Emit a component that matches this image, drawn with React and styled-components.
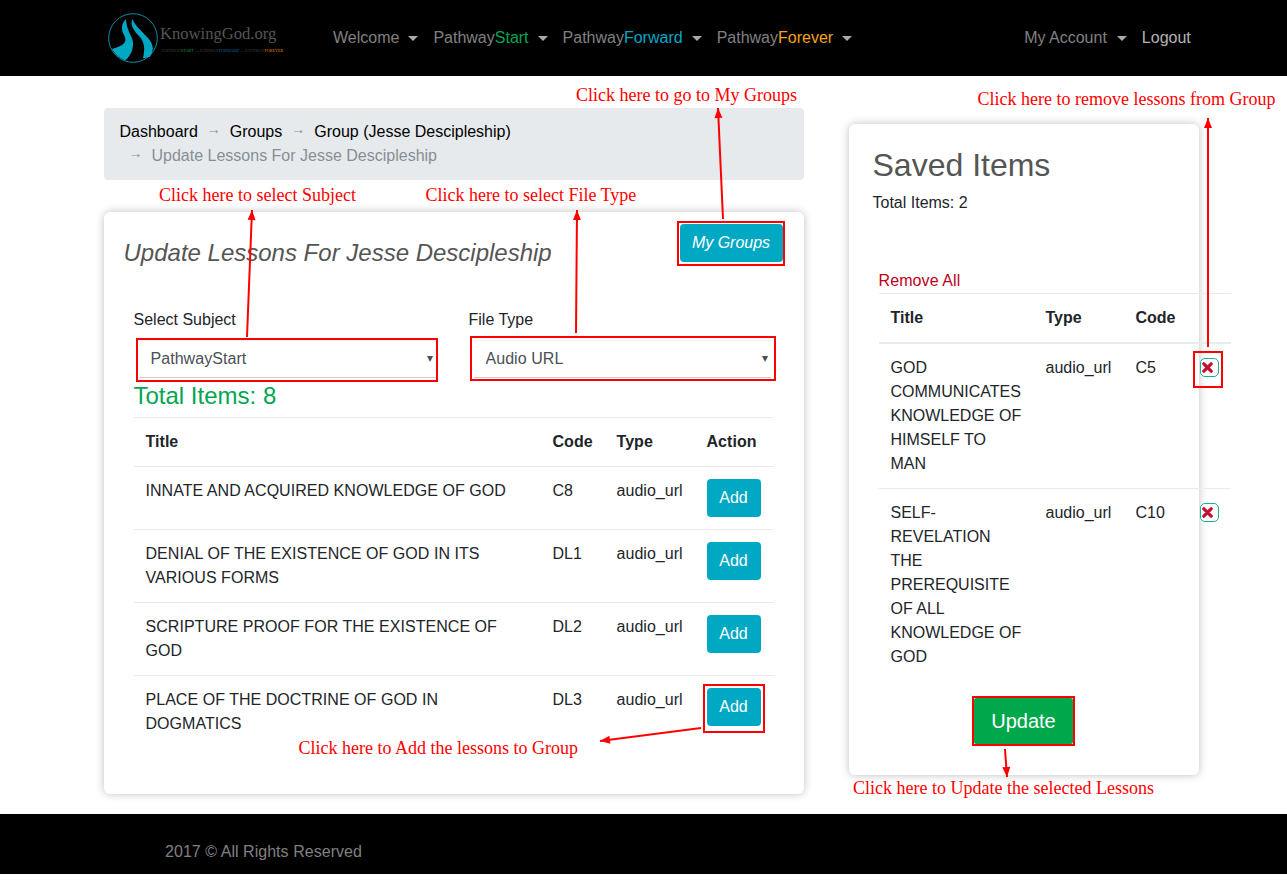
import React from 'react';
import styled, { createGlobalStyle } from 'styled-components';

const GlobalStyle = createGlobalStyle`
  html, body {
    margin: 0;
    padding: 0;
    background: #fff;
    font-family: "Liberation Sans", Arial, sans-serif;
    font-size: 16px;
    line-height: 24px;
    color: #212529;
  }
  * { box-sizing: border-box; }
`;

const Page = styled.div`
  position: relative;
  width: 1287px;
`;

const Navbar = styled.nav`
  display: flex;
  align-items: center;
  height: 76px;
  padding-left: 108px;
  background: #000;
`;

const Brand = styled.div`
  display: flex;
  align-items: flex-start;
  width: 225px;
`;

const BrandText = styled.div`
  display: flex;
  flex-direction: column;
  padding-top: 10px;
  font-family: "Liberation Serif", serif;
`;

const BrandName = styled.span`
  font-size: 16.6px;
  line-height: 24px;
  color: #555;
`;

const BrandTag = styled.span`
  font-size: 4px;
  line-height: 6px;
  margin-top: 2px;
  margin-left: 2px;
  letter-spacing: 0.1px;
  white-space: nowrap;
  color: #444;
`;

const Tint = styled.span`
  color: ${(p) => p.$color};
`;

const NavList = styled.div`
  display: flex;
  gap: 15px;
`;

const NavItem = styled.a`
  display: flex;
  align-items: center;
  color: ${(p) => p.$light ? '#b5b5b5' : '#808080'};
  white-space: nowrap;
`;

const Caret = styled.i`
  display: inline-block;
  margin-left: 9px;
  border-top: 5px solid #aaa;
  border-left: 5px solid transparent;
  border-right: 5px solid transparent;
`;

const NavRight = styled(NavList)`
  margin-left: 172px;

  ${Caret} {
    margin-left: 10px;
  }
`;

const Main = styled.main`
  display: flex;
  gap: 45px;
  padding: 32px 0 20px 103.5px;
`;

const LeftCol = styled.div`
  width: 700px;
`;

const RightCol = styled.div`
  width: 350px;
  padding-top: 16px;
`;

const Breadcrumb = styled.div`
  height: 72px;
  margin-bottom: 32px;
  padding: 12px 16px;
  background: #e6eaec;
  border-radius: 4px;
  color: #000;
`;

const Crumb = styled.span`
  color: ${(p) => p.$muted ? '#868e96' : '#000'};
`;

const Sep = styled.span`
  display: inline-block;
  width: 32px;
  text-align: center;
  font-size: 14px;
  line-height: 0;
  vertical-align: 3px;
  color: #868e96;
`;

const Card = styled.section`
  background: #fff;
  border-radius: 6px;
  box-shadow: 0 0 8px rgba(0, 0, 0, 0.25);
`;

const LessonsCard = styled(Card)`
  height: 582px;
  padding: 12px 30px 0 30px;
`;

const CardHead = styled.div`
  display: flex;
  justify-content: space-between;
  margin: 0 -9px 0 -10px;
`;

const CardTitle = styled.h2`
  margin: 0;
  padding-top: 12px;
  font-size: 24px;
  line-height: 34px;
  font-weight: 400;
  font-style: italic;
  color: #555;
`;

const GroupsButton = styled.button`
  width: 103px;
  height: 38px;
  border: 0;
  border-radius: 4px;
  background: #00a8c4;
  color: #fff;
  font: italic 16px "Liberation Sans", Arial, sans-serif;
`;

const Filters = styled.div`
  display: flex;
  gap: 30px;
  margin-top: 38px;
`;

const Field = styled.div`
  width: 305px;
`;

const FieldLabel = styled.label`
  display: block;
  margin-bottom: 8px;
`;

const SelectBox = styled.div`
  position: relative;
  margin-left: 5px;
  width: 297px;
`;

const Select = styled.select`
  display: block;
  width: 100%;
  height: 38px;
  padding: 0 12px 2px;
  border: 0;
  border-top: 1px solid #f0f0f0;
  border-bottom: 1px solid #ccc;
  border-radius: 0;
  appearance: none;
  background: #fff;
  color: #495057;
  font: 16px "Liberation Sans", Arial, sans-serif;
  letter-spacing: 0.05px;
`;

const SelectCaret = styled.span`
  position: absolute;
  top: 6px;
  right: 3px;
  font-size: 12px;
  color: #495057;
`;

const TotalItems = styled.div`
  margin: 3px 0 7px;
  font-size: 24px;
  line-height: 29px;
  color: #00a651;
`;

const LessonTable = styled.table`
  width: 640px;
  table-layout: fixed;
  border-collapse: collapse;
  letter-spacing: 0.04px;
`;

const SavedTable = styled(LessonTable)`
  width: 352px;
  margin-left: 30px;
  letter-spacing: 0;
`;

const Th = styled.th`
  width: ${(p) => p.$w}px;
  padding: 12px;
  text-align: left;
  vertical-align: bottom;
  border-top: 1px solid #e9ecef;
  border-bottom: ${(p) => p.$thin ? 1 : 2}px solid #e9ecef;
`;

const Td = styled.td`
  padding: 12px;
  vertical-align: top;
  border-top: 1px solid #e9ecef;
`;

const AddButton = styled.button`
  width: 54px;
  height: 38px;
  border: 0;
  border-radius: 4px;
  background: #00a8c4;
  color: #fff;
  font: 16px "Liberation Sans", Arial, sans-serif;
`;

const SavedCard = styled(Card)`
  height: 651px;
  overflow: visible;
  padding-top: 24px;
`;

const SavedTitle = styled.h2`
  margin: 0 0 0 24px;
  font-size: 32px;
  line-height: 34px;
  font-weight: 400;
  color: #555;
`;

const SavedCount = styled.div`
  margin: 9px 0 0 24px;
`;

const RemoveAll = styled.a`
  display: block;
  margin: 54px 0 0 30px;
  letter-spacing: 0.1px;
  color: #c00020;
`;

const RemoveButton = styled.button`
  display: flex;
  align-items: center;
  justify-content: center;
  width: 19px;
  height: 19px;
  margin-top: 2px;
  padding: 0 4px 0 0;
  background: #fff;
  border: 1px solid #1ab092;
  border-radius: 5px;
  color: #c8102e;
`;

const UpdateRow = styled.div`
  display: flex;
  justify-content: center;
  margin-top: 17px;
`;

const UpdateButton = styled.button`
  width: 99px;
  height: 46px;
  border: 0;
  border-radius: 2px;
  background: #00a84c;
  color: #fff;
  font: 20px "Liberation Sans", Arial, sans-serif;
`;

const Footer = styled.footer`
  height: 60px;
  padding: 26px 0 0 165px;
  background: #000;
  letter-spacing: 0.04px;
  color: #808080;
`;

const Note = styled.span`
  position: absolute;
  left: ${(p) => p.$x}px;
  top: ${(p) => p.$y}px;
  font-family: "Liberation Serif", serif;
  font-size: 18px;
  line-height: 22px;
  color: #f00;
  white-space: nowrap;
`;

const Marks = styled.svg`
  position: absolute;
  left: 0;
  top: 0;
  pointer-events: none;
`;

const lessons = [
  ['INNATE AND ACQUIRED KNOWLEDGE OF GOD', 'C8'],
  ['DENIAL OF THE EXISTENCE OF GOD IN ITS VARIOUS FORMS', 'DL1'],
  ['SCRIPTURE PROOF FOR THE EXISTENCE OF GOD', 'DL2'],
  ['PLACE OF THE DOCTRINE OF GOD IN DOGMATICS', 'DL3'],
];

const saved = [
  ['GOD COMMUNICATES KNOWLEDGE OF HIMSELF TO MAN', 'C5'],
  ['SELF-REVELATION THE PREREQUISITE OF ALL KNOWLEDGE OF GOD', 'C10'],
];

const boxes = [
  [678, 222, 106, 43],
  [137, 339, 300, 42],
  [471, 337, 304, 43],
  [1194, 352, 28, 35],
  [704, 685, 60, 47],
  [973, 697, 101, 48],
];

const arrows = [
  [723, 219, 718, 108],
  [247, 337, 252, 210],
  [576, 333, 577, 210],
  [1208, 347, 1208, 118],
  [701, 728, 600, 741],
  [1005, 749, 1007, 777],
];

const Arrow = ({ line }) => {
  const [x1, y1, x2, y2] = line;
  const a = Math.atan2(y2 - y1, x2 - x1);
  const p = (d, s) => `${x2 - Math.cos(a) * d - Math.sin(a) * s},${y2 - Math.sin(a) * d + Math.cos(a) * s}`;
  return (
    <g>
      <line x1={x1} y1={y1} x2={x2} y2={y2} stroke="#f00" strokeWidth="2" />
      <polygon points={`${x2},${y2} ${p(10, 4)} ${p(10, -4)}`} fill="#f00" />
    </g>
  );
};

const Logo = () => (
  <svg width="52" height="52" viewBox="0 0 52 52">
    <circle cx="25" cy="26" r="24.3" fill="#000" stroke="#0e8ea6" strokeWidth="1" />
    <path d="M18 7 C13 12 13 17 16 23 C19 29 18 33 4 37 C7 42 11 46 17 48.5 C25 42 27 32 23 24 C20 18 18 13 18 7 Z" fill="#00a8c4" />
    <path d="M24.5 7 C22 12 25 18 31 24 C37 30 37 38 35 46 C38 46 40 45 42 44.7 C46 38 46 33 40 26 C33 18 27 14 24.5 7 Z" fill="#00a8c4" />
  </svg>
);

const Times = () => (
  <svg width="11" height="11" viewBox="0 0 12 12">
    <path d="M2 2 L10 10 M10 2 L2 10" stroke="currentColor" strokeWidth="3.6" strokeLinecap="round" />
  </svg>
);

const NavEntry = ({ children, light }) => (
  <NavItem $light={light}>{children}<Caret /></NavItem>
);

const App = () => {
  return (
    <Page>
      <GlobalStyle />
      <Navbar>
        <Brand>
          <Logo />
          <BrandText>
            <BrandName>KnowingGod.org</BrandName>
            <BrandTag>
              PATHWAY<Tint $color="#00a651">START</Tint> — PATHWAY<Tint $color="#0a6fb0">FORWARD</Tint> — PATHWAY<Tint $color="#f28c00">FOREVER</Tint>
            </BrandTag>
          </BrandText>
        </Brand>
        <NavList>
          <NavEntry>Welcome</NavEntry>
          <NavEntry>Pathway<Tint $color="#00a651">Start</Tint></NavEntry>
          <NavEntry>Pathway<Tint $color="#00a8c4">Forward</Tint></NavEntry>
          <NavEntry>Pathway<Tint $color="#f5a31a">Forever</Tint></NavEntry>
        </NavList>
        <NavRight>
          <NavEntry>My Account</NavEntry>
          <NavItem $light>Logout</NavItem>
        </NavRight>
      </Navbar>

      <Main>
        <LeftCol>
          <Breadcrumb>
            <Crumb>Dashboard</Crumb><Sep>→</Sep>
            <Crumb>Groups</Crumb><Sep>→</Sep>
            <Crumb>Group (Jesse Descipleship)</Crumb>
            <br />
            <Sep>→</Sep><Crumb $muted>Update Lessons For Jesse Descipleship</Crumb>
          </Breadcrumb>
          <LessonsCard>
            <CardHead>
              <CardTitle>Update Lessons For Jesse Descipleship</CardTitle>
              <GroupsButton>My Groups</GroupsButton>
            </CardHead>
            <Filters>
              <Field>
                <FieldLabel>Select Subject</FieldLabel>
                <SelectBox>
                  <Select defaultValue="PathwayStart">
                    <option>PathwayStart</option>
                  </Select>
                  <SelectCaret>▾</SelectCaret>
                </SelectBox>
              </Field>
              <Field>
                <FieldLabel>File Type</FieldLabel>
                <SelectBox>
                  <Select defaultValue="Audio URL">
                    <option>Audio URL</option>
                  </Select>
                  <SelectCaret>▾</SelectCaret>
                </SelectBox>
              </Field>
            </Filters>
            <TotalItems>Total Items: 8</TotalItems>
            <LessonTable>
              <thead>
                <tr>
                  <Th $thin $w={407}>Title</Th>
                  <Th $thin $w={64}>Code</Th>
                  <Th $thin $w={90}>Type</Th>
                  <Th $thin $w={79}>Action</Th>
                </tr>
              </thead>
              <tbody>
                {lessons.map(([title, code]) => (
                  <tr key={code}>
                    <Td>{title}</Td>
                    <Td>{code}</Td>
                    <Td>audio_url</Td>
                    <Td><AddButton>Add</AddButton></Td>
                  </tr>
                ))}
              </tbody>
            </LessonTable>
          </LessonsCard>
        </LeftCol>

        <RightCol>
          <SavedCard>
            <SavedTitle>Saved Items</SavedTitle>
            <SavedCount>Total Items: 2</SavedCount>
            <RemoveAll>Remove All</RemoveAll>
            <SavedTable>
              <thead>
                <tr>
                  <Th $w={155}>Title</Th>
                  <Th $w={90}>Type</Th>
                  <Th $w={64}>Code</Th>
                  <Th $w={43}></Th>
                </tr>
              </thead>
              <tbody>
                {saved.map(([title, code]) => (
                  <tr key={code}>
                    <Td>{title}</Td>
                    <Td>audio_url</Td>
                    <Td>{code}</Td>
                    <Td><RemoveButton><Times /></RemoveButton></Td>
                  </tr>
                ))}
              </tbody>
            </SavedTable>
            <UpdateRow>
              <UpdateButton>Update</UpdateButton>
            </UpdateRow>
          </SavedCard>
        </RightCol>
      </Main>

      <Footer>2017 © All Rights Reserved</Footer>

      <Marks width="1287" height="874" viewBox="0 0 1287 874">
        {boxes.map(([x, y, w, h]) => (
          <rect key={`${x}-${y}`} x={x} y={y} width={w} height={h} fill="none" stroke="#f00" strokeWidth="2" />
        ))}
        {arrows.map((line) => <Arrow key={line.join('-')} line={line} />)}
      </Marks>
      <Note $x={576} $y={84}>Click here to go to My Groups</Note>
      <Note $x={977.5} $y={88}>Click here to remove lessons from Group</Note>
      <Note $x={159} $y={184}>Click here to select Subject</Note>
      <Note $x={425.5} $y={184}>Click here to select File Type</Note>
      <Note $x={298.5} $y={737}>Click here to Add the lessons to Group</Note>
      <Note $x={853} $y={777}>Click here to Update the selected Lessons</Note>
    </Page>
  );
};

export default App;
